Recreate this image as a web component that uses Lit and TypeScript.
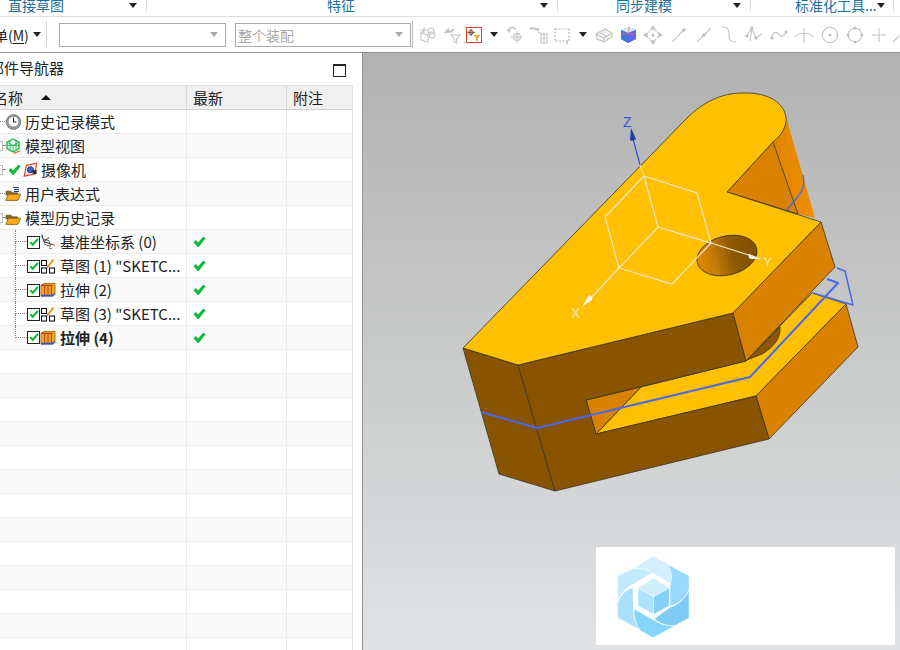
import { css, html, LitElement, svg } from "lit"
import { customElement } from "lit/decorators.js"

const grayIcon = (body: unknown) => html`<svg class="tool" viewBox="0 0 20 20" fill="none" stroke="#c4c4c4" stroke-width="1.1">${body}</svg>`

const clockIcon = html`<svg class="ico" viewBox="0 0 16 16">
  <circle cx="8.500" cy="8" r="7.400" fill="#9aa0a6" stroke="#6b7076" stroke-width=".8"/>
  <circle cx="8.500" cy="7.600" r="5.400" fill="#fff" stroke="#555" stroke-width=".6"/>
  <path d="M8.500 3.600V8H11.500" fill="none" stroke="#222" stroke-width="1.2"/>
</svg>`

const cubeIcon = html`<svg class="ico" viewBox="0 0 16 16" fill="none">
  <path d="M8 1L14 4.200V10.600L8 14L2 10.600V4.200Z" stroke="#16b84a" stroke-width="1.3"/>
  <path d="M2 4.200L8 7.400L14 4.200M8 7.400V14M5 2.600V12.200M11 2.600V12.200M2 7.600H14" stroke="#16b84a" stroke-width=".9"/>
  <path d="M9 15.400L15 12.800" stroke="#e0703a" stroke-width="1.2"/>
</svg>`

const checkIcon = html`<svg class="tick" viewBox="0 0 13 12"><path d="M.5 6.200L3 4L5 6.400L10.400 .5L12.600 2.400L5.200 11.500Z" fill="#12b83c"/></svg>`

const cameraIcon = html`<svg class="cam" viewBox="0 0 15 16" fill="none">
  <path d="M3.400 3.400L13.600 1.200L12 12L1.200 14.200Z" fill="#fbeeea" stroke="#d8482f" stroke-width="1.2"/>
  <circle cx="7.400" cy="7.800" r="3" fill="#3f62c8" stroke="#22307a"/>
  <rect x="9.600" y="8" width="4" height="4" fill="#333"/>
</svg>`

const folderIcon = (lines = false) => html`<svg class="ico" viewBox="0 0 16 16">
  ${lines ? svg`<path d="M8 1.500H14M9 3.500H14M9 5.500H14" stroke="#2c3f9a" stroke-width="1" fill="none"/>` : ""}
  <path d="M1 5.200H6L7.400 6.800H12.400V9H1Z" fill="#8a6a2a" stroke="#5b4518" stroke-width=".6"/>
  <path d="M.8 14.400L3.400 8.200H15.600L12.800 14.400Z" fill="#f7ae1c" stroke="#7d5a12" stroke-width=".8"/>
</svg>`

const checkBox = html`<svg class="box" viewBox="0 0 13 13">
  <rect x=".5" y=".5" width="12" height="12" fill="#fff" stroke="#222"/>
  <path d="M2.400 6.800L4 5.400L5.600 7.200L10.200 2.200L11.800 3.400L5.800 10.400Z" fill="#12b83c"/>
</svg>`

const datumIcon = html`<svg class="ico" viewBox="0 0 16 16" fill="none">
  <path d="M2 2L4 7.600L12 10.400M4 7.600L9 3.600" stroke="#333" stroke-width="1"/>
  <path d="M3.600 5L9 6.600L10.400 12.400L5 10.600Z" stroke="#555" stroke-width=".9"/>
  <path d="M2.200 .6V3.400" stroke="#2240d0" stroke-width="1.2"/>
  <path d="M12 10.400L15 11.400" stroke="#d06a30" stroke-width="1.2"/>
  <path d="M9 14L12 15" stroke="#777" stroke-width="1"/>
</svg>`

const sketchIcon = html`<svg class="ico" viewBox="0 0 16 16" fill="none">
  <rect x="1.500" y="2.500" width="5" height="5" stroke="#111" stroke-width="1.1"/>
  <rect x="1.500" y="10" width="5" height="5" stroke="#111" stroke-width="1.1"/>
  <rect x="9.500" y="10" width="5" height="5" stroke="#111" stroke-width="1.1"/>
  <path d="M8 8.400L13.600 1.600" stroke="#e8a020" stroke-width="2.2"/>
  <path d="M7.400 9.400L8 8" stroke="#c0392b" stroke-width="1.4"/>
</svg>`

const extrudeIcon = html`<svg class="ico" viewBox="0 0 16 16" fill="none">
  <path d="M1 3.400L4 1.400H15V11.600L12.400 14H1Z" fill="#f5a623" stroke="#9a5a10" stroke-width=".8"/>
  <path d="M4.600 3.400V13.400M8 3.400V13.400M11.400 3.400V13.400M1 3.400H12.400" stroke="#b5450f" stroke-width="1.1"/>
  <path d="M1 13.600H12.600L15 11.600" stroke="#2f56c8" stroke-width="1.6"/>
</svg>`

const dot = (cx: number, cy: number, r = 1.6) => svg`<circle cx=${cx} cy=${cy} r=${r} fill="#c0c0c0" stroke="none"/>`

const toolbar: { x: number, icon?: unknown }[] = [
  { x: 427, icon: grayIcon(svg`<path d="M3 8L10 10V17L3 15ZM3 8L6 6M6 2V8M2 5H9"/><circle cx="13" cy="6" r="3"/><circle cx="14" cy="10" r="3"/>`) },
  { x: 452, icon: grayIcon(svg`<path d="M3 8L6 5V7C9 7 11 6 11 4" stroke-width="2.2"/><path d="M9 10H18L14.600 14V18L12.400 16.600V14Z"/>`) },
  { x: 475, icon: html`<svg class="tool red" viewBox="0 0 16 16" fill="none">
    <rect x=".5" y=".5" width="15" height="15" fill="#fff" stroke="#d8432a"/>
    <circle cx="5" cy="5.400" r="2.200" stroke="#8a5a3a"/>
    <path d="M5 1.800V9M1.400 5.400H8.800" stroke="#6a4a3a"/>
    <path d="M7.400 8H14.400L12 11V14.400L10 13.200V11Z" fill="#f4a83c"/>
  </svg>` },
  { x: 492 },
  { x: 515, icon: grayIcon(svg`<path d="M2 6C3 2 8 1 10 5" stroke-width="1.5"/><path d="M1 4L3 7L5 5"/><circle cx="11" cy="12" r="3.400"/><path d="M11 6V18M5 12H17"/>`) },
  { x: 539, icon: grayIcon(svg`<path d="M1 4C4 1 7 6 10 4" stroke-width="2.4"/><path d="M9 7L13 9"/><rect x="12" y="9" width="6" height="9"/><path d="M15 9V18M12 13.500H18"/>`) },
  { x: 563, icon: grayIcon(svg`<rect x="3" y="4" width="14" height="12" stroke-dasharray="2 1.4" stroke="#aaa"/><path d="M15 16V19" stroke="#aaa"/>`) },
  { x: 582 },
  { x: 603, icon: grayIcon(svg`<path d="M2 9L11 4L18 8V12L10 17L3 14ZM2 9L3 14M2 9L10 13L18 8M10 13V17M5 7.400L13 11.600" fill="#f3f3f3"/>`) },
  { x: 627, icon: html`<svg class="tool" viewBox="0 0 20 20">
    <path d="M3 5L11 2L18 5V14L10 18L3 14Z" fill="#6d8ff0"/>
    <path d="M3 5L11 2L18 5L10 8Z" fill="#d8e6f6"/>
    <path d="M3 5L10 8V18L3 14Z" fill="#3f78d8"/>
    <path d="M10 8L18 5V14L10 18Z" fill="#5a68f2"/>
    <path d="M11 2V9M4 9H17" stroke="#e8705c" stroke-width=".8" fill="none"/>
  </svg>` },
  { x: 653, icon: grayIcon(svg`<path d="M10 3L17 10L10 17L3 10Z" stroke-dasharray="2 1"/><path d="M10 1L8 4H12ZM10 19L8 16H12ZM1 10L4 8V12ZM19 10L16 8V12Z" fill="#c4c4c4"/>${dot(10, 10)}`) },
  { x: 679, icon: grayIcon(svg`<path d="M3 17L15 5"/>${dot(15, 5, 1.8)}`) },
  { x: 703, icon: grayIcon(svg`<path d="M3 17L17 3"/>${dot(10, 10, 1.8)}`) },
  { x: 729, icon: grayIcon(svg`<path d="M3 2C9 2 10 4 10 9C10 15 11 17 17 17"/>`) },
  { x: 753, icon: grayIcon(svg`<path d="M2 12L8 3L12 13L18 9M8 3L6 16"/>${dot(8, 3)}${dot(3, 11)}${dot(12, 13)}`) },
  { x: 778, icon: grayIcon(svg`<path d="M2 13C5 5 9 7 10 10C12 13 15 11 18 6"/>${dot(3, 13)}${dot(17, 7)}`) },
  { x: 803, icon: grayIcon(svg`<path d="M1 12C4 7 16 7 19 12M10 3V18"/>`) },
  { x: 830, icon: grayIcon(svg`<circle cx="10" cy="10" r="7.600"/>${dot(10, 10, 1.5)}`) },
  { x: 853, icon: grayIcon(svg`<circle cx="10" cy="10" r="6.800"/>${dot(10, 3, 1.5)}${dot(10, 17, 1.5)}${dot(3, 10, 1.5)}${dot(17, 10, 1.5)}`) },
  { x: 880, icon: grayIcon(svg`<path d="M10 3V17M3 10H17"/>`) },
  { x: 899, icon: grayIcon(svg`<path d="M2 17L8 11"/>`) },
]

type Row = {
  kind: "root" | "child"
  label: string
  icon: unknown
  box?: boolean
  tick?: boolean
  last?: boolean
  bold?: boolean
}

const rows: Row[] = [
  { kind: "root", label: "历史记录模式", icon: clockIcon },
  { kind: "root", label: "模型视图", icon: cubeIcon, box: true },
  { kind: "root", label: "摄像机", icon: cameraIcon, box: true, tick: true },
  { kind: "root", label: "用户表达式", icon: folderIcon(true) },
  { kind: "root", label: "模型历史记录", icon: folderIcon(), box: true },
  { kind: "child", label: "基准坐标系 (0)", icon: datumIcon },
  { kind: "child", label: "草图 (1) \"SKETC...", icon: sketchIcon },
  { kind: "child", label: "拉伸 (2)", icon: extrudeIcon },
  { kind: "child", label: "草图 (3) \"SKETC...", icon: sketchIcon },
  { kind: "child", label: "拉伸 (4)", icon: extrudeIcon, last: true, bold: true },
  ...Array.from({ length: 13 }, () => ({ kind: "root" as const, label: "", icon: null })),
]

@customElement("app-root")
export class AppRoot extends LitElement {
  static styles = css`
  :host {
    display: block;
    width: 900px;
    height: 650px;
    overflow: hidden;
    background: #fff;
    color: #222;
    font-family: "Noto Sans CJK SC", "Liberation Sans", sans-serif;
    font-size: 14px;
  }

  .ribbon {
    display: flex;
    height: 17px;
    box-sizing: border-box;
    border-bottom: 1px solid #dedede;
    overflow: hidden;
    color: #1c6f9f;
    line-height: 14px;
  }

  .group {
    display: flex;
    height: 12px;
    box-sizing: border-box;
    border-right: 1px solid #dcdcdc;
    flex: none;
  }

  .group span {
    margin-top: -2px;
    white-space: nowrap;
  }

  .group i {
    margin: 3px 9px 0 auto;
  }

  .g1 { width: 147px; padding-left: 8px; }
  .g2 { width: 411px; padding-left: 180px; }
  .g3 { width: 193px; padding-left: 58px; }
  .g4 { width: 143px; padding-left: 44px; }

  .arrow {
    display: block;
    width: 0;
    height: 0;
    border-left: 4px solid transparent;
    border-right: 4px solid transparent;
    border-top: 5px solid #222;
    flex: none;
  }

  .toolbar {
    display: flex;
    align-items: center;
    height: 36px;
    box-sizing: border-box;
    border-bottom: 1px solid #8f9597;
  }

  .menu {
    margin-left: -6px;
    width: 39px;
    white-space: nowrap;
    flex: none;
  }

  .menu u {
    text-underline-offset: 2px;
  }

  .sep {
    width: 1px;
    height: 27px;
    background: #d8d8d8;
    flex: none;
    margin-left: 5px;
  }

  .sep.tools {
    margin: 0 2px 0 1px;
    background: #bbb;
  }

  .combo {
    display: flex;
    align-items: center;
    justify-content: space-between;
    box-sizing: border-box;
    height: 24px;
    padding: 0 7px 0 2px;
    border: 1px solid #ababab;
    color: #a8a8a8;
    flex: none;
  }

  .combo.parts { width: 167px; margin-left: 12px; }
  .combo.scope { width: 176px; margin-left: 9px; }

  .combo .arrow {
    border-top-color: #a9a9a9;
  }

  .slot {
    display: flex;
    justify-content: center;
    flex: none;
  }

  .tool {
    width: 20px;
    height: 20px;
    flex: none;
  }

  .tool.red {
    width: 16px;
    height: 16px;
  }

  .main {
    display: flex;
    height: 597px;
  }

  .panel {
    width: 362px;
    flex: none;
    display: flex;
    flex-direction: column;
    overflow: hidden;
    font-size: 15px;
  }

  .panel-head {
    display: flex;
    align-items: center;
    justify-content: space-between;
    height: 32px;
    padding-right: 16px;
    box-sizing: border-box;
  }

  .panel-head span {
    margin-left: -11px;
    margin-bottom: 3px;
  }

  .maxi {
    width: 13px;
    height: 13px;
    box-sizing: border-box;
    border: 1px solid #222;
    border-top-width: 2px;
    margin-top: 2px;
  }

  .table {
    width: 353px;
    flex: 1;
    border-top: 1px solid #dedede;
    border-right: 1px solid #e2e2e2;
    box-sizing: border-box;
    overflow: hidden;
  }

  .table-head, .row {
    display: grid;
    grid-template-columns: 187px 100px 65px;
    box-sizing: border-box;
  }

  .table-head {
    height: 24px;
    background: #f0f0f0;
    border-bottom: 1px solid #d2d2d2;
    align-items: center;
  }

  .head-cell {
    display: flex;
    align-items: center;
    height: 100%;
    padding-left: 6px;
    border-right: 1px solid #d8d8d8;
    box-sizing: border-box;
  }

  .head-cell:first-child {
    padding-left: 0;
  }

  .head-cell:first-child span {
    margin-left: -7px;
  }

  .head-cell:last-child {
    border-right: 0;
  }

  .sort {
    margin-left: 18px;
    width: 0;
    height: 0;
    border-left: 5.5px solid transparent;
    border-right: 5.5px solid transparent;
    border-bottom: 5px solid #111;
  }

  .row {
    height: 24px;
    border-bottom: 1px solid #ececec;
  }

  .row.alt {
    background: #fafafa;
  }

  .cell {
    display: flex;
    align-items: center;
    border-right: 1px solid #ececec;
    box-sizing: border-box;
    min-width: 0;
    white-space: nowrap;
  }

  .cell:last-child {
    border-right: 0;
  }

  .cell.state {
    padding-left: 6px;
  }

  .stub {
    flex: none;
    width: 5px;
    border-bottom: 1px dotted #888;
  }

  .expander {
    flex: none;
    display: flex;
    align-items: center;
    width: 5px;
  }

  .expander::before {
    content: "";
    width: 2px;
    height: 8px;
    border: 1px solid #bbb;
    border-left: 0;
    flex: none;
  }

  .expander::after {
    content: "";
    width: 2px;
    border-bottom: 1px dotted #888;
    flex: none;
  }

  .expander + .tick {
    margin-left: 3px;
  }

  .ico {
    width: 16px;
    height: 16px;
    flex: none;
  }

  .cam {
    width: 15px;
    height: 16px;
    flex: none;
    margin-left: 2px;
    margin-right: -1px;
  }

  .tick {
    width: 13px;
    height: 12px;
    flex: none;
  }

  .box {
    width: 13px;
    height: 13px;
    flex: none;
  }

  .label {
    margin-left: 4px;
    line-height: 20px;
  }

  .label.bold {
    font-weight: 700;
  }

  .branch {
    flex: none;
    align-self: stretch;
    width: 12px;
    margin-left: 15px;
  }

  .branch .h {
    box-sizing: border-box;
    height: 12px;
    border-left: 1px dotted #888;
    border-bottom: 1px dotted #888;
  }

  .branch .v {
    height: 12px;
    border-left: 1px dotted #888;
  }

  .view {
    position: relative;
    flex: 1;
    border-left: 1px solid #8f9597;
    background: linear-gradient(#b2b2b2, #c6c7c7 45%, #e1e2e4);
  }

  .view > svg {
    display: block;
  }

  .logo-box {
    position: absolute;
    right: 5px;
    bottom: 5px;
    width: 299px;
    height: 98px;
    background: #fff;
    padding: 7px 0 0 21px;
    box-sizing: border-box;
  }

  .logo-box svg {
    display: block;
    width: 73px;
    height: 85px;
  }
`

  renderToolbar() {
    let left = 415
    return toolbar.map((item, i) => {
      const next = toolbar[i + 1]
      const right = next ? Math.round((item.x + next.x) / 2) : 912
      const width = right - left
      left = right
      return html`<div class="slot" style="width:${width}px">
        ${item.icon ?? html`<i class="arrow"></i>`}
      </div>`
    })
  }

  renderRow(row: Row, i: number) {
    let tree: unknown = ""
    if (row.icon) {
      if (row.kind === "child") {
        tree = html`
          <div class="branch"><div class="h"></div>${row.last ? "" : html`<div class="v"></div>`}</div>
          ${checkBox}`
      } else {
        tree = html`<div class=${row.box ? "expander" : "stub"}></div>${row.tick ? checkIcon : ""}`
      }
    }
    const done = row.kind === "child"
    return html`
      <div class="row ${i % 2 ? "alt" : ""}">
        <div class="cell">
          ${tree}${row.icon ?? ""}
          ${row.label ? html`<span class="label ${row.bold ? "bold" : ""}">${row.label}</span>` : ""}
        </div>
        <div class="cell state">${done ? checkIcon : ""}</div>
        <div class="cell"></div>
      </div>`
  }

  renderModel() {
    return html`<svg width="537" height="597" viewBox="363 53 537 597">
      <defs>
        <linearGradient id="hole" x1="0" x2="1" y1="0" y2="0">
          <stop offset="0" stop-color="#e08a00"/>
          <stop offset=".3" stop-color="#c07a08"/>
          <stop offset=".6" stop-color="#8c5800"/>
          <stop offset="1" stop-color="#805000"/>
        </linearGradient>
        <linearGradient id="strip" x1="0" x2="1" y1="0" y2="0">
          <stop offset="0" stop-color="#e08600"/>
          <stop offset="1" stop-color="#ee8e00"/>
        </linearGradient>
      </defs>
      <path d="M773 142L786 117L815 218L798 214Z" fill="url(#strip)"/>
      <g stroke="#3a3228" stroke-width=".8" stroke-linejoin="round">
        <path d="M727 192L773 142L798 214Z" fill="#d98200"/>
        <path d="M596 434L641 387L746 361L812 293L846 304L756 396Z" fill="#ffc000"/>
        <path d="M747 360L780 327C781 338 774 347 762 354Z" fill="#8c5800"/>
        <path d="M586 400L641 387L596 434Z" fill="#d98200"/>
        <path d="M756 396L769 439L858 347L846 304Z" fill="#d98200"/>
        <path d="M463 348L518 365L555 491L499 474Z" fill="#885400"/>
        <path d="M518 365L733 313L746 361L586 400L596 434L756 396L769 439L555 491Z" fill="#885400"/>
        <path d="M733 313L821 222L835 267L746 361Z" fill="#d98200"/>
        <path d="M463 348L518 365L733 313L821 222L727 192L773 142C782 135 787 126 786 117C783 100 764 92 742 93C722 93 703 102 687 118Z" fill="#ffc000"/>
      </g>
      <ellipse cx="727" cy="255.500" rx="30.500" ry="19.500" transform="rotate(-14 727 255.500)" fill="url(#hole)" stroke="#3a3228" stroke-width=".8"/>

      <g fill="none" stroke="#4a68ee" stroke-linejoin="round">
        <path d="M481 412L537 428L750 377L838 283L827 279" stroke-width="2"/>
        <path d="M837 268L845 271L853 305L813 293" stroke-width="1.5"/>
        <path d="M803 175C806 186 800 195 795 200L787 210" stroke-width="1.3"/>
        <path d="M640 165L632 135" stroke="#2848e0" stroke-width="1.1"/>
      </g>

      <g fill="none" stroke="#f0e6cc" stroke-width="1.2">
        <path d="M644 176L697 193L711 243L658 227L644 176L605 217L619 268L658 227M619 268L672 284L711 243"/>
        <path d="M711 243L752 256M619 268L590 299"/>
      </g>
      <path d="M640 165L644 176" stroke="#f0e6cc" stroke-width="1"/>
      <path d="M631 128L636 139C634 141 631 141 630 140Z" fill="#1f3fa8"/>
      <path d="M762 259L749 254C748 256 749 259 751 259Z" fill="#f2f2f2"/>
      <path d="M582 307L589 295C591 295 593 298 592 300Z" fill="#f4f4f4"/>
      <text x="623" y="127" font-family="Liberation Sans" font-size="14" fill="#3355e6">Z</text>
      <text x="763" y="267" font-family="Liberation Sans" font-size="14" fill="#eee2c4">Y</text>
      <text x="571" y="318" font-family="Liberation Sans" font-size="14" fill="#eee2c4">X</text>
    </svg>`
  }

  renderLogo() {
    return html`<svg viewBox="80 40 220 255" stroke="#fff" stroke-width="1.500" stroke-linejoin="round">
      <path d="M189 45L232 68C245 90 248 110 243 130L187 97C165 85 145 82 125 85Z" fill="#d6effe"/>
      <path d="M232 70L297 105V147C285 175 265 190 240 197V135C248 110 245 90 232 70Z" fill="#97dafc"/>
      <path d="M297 150V232L255 255C235 258 212 250 192 235L240 200C265 192 285 175 297 150Z" fill="#80cbf5"/>
      <path d="M255 255L189 292L150 270C135 250 130 228 132 205L190 238C212 252 235 258 255 255Z" fill="#85d5fd"/>
      <path d="M82 232V185C92 160 108 147 128 140L130 200C128 228 135 250 150 268Z" fill="#abe0fb"/>
      <path d="M82 105L125 85C145 82 165 85 185 97L130 130C108 140 92 158 82 180Z" fill="#c2e9fd"/>
      <path d="M190 112L238 142L190 168L143 142Z" fill="#cfeefe"/>
      <path d="M143 142L190 168V222L143 195Z" fill="#afe2fc"/>
      <path d="M238 142V195L190 222V168Z" fill="#85d0f7"/>
    </svg>`
  }

  render() {
    return html`
      <div class="ribbon">
        <div class="group g1"><span>直接草图</span><i class="arrow"></i></div>
        <div class="group g2"><span>特征</span><i class="arrow"></i></div>
        <div class="group g3"><span>同步建模</span><i class="arrow"></i></div>
        <div class="group g4"><span>标准化工具...</span><i class="arrow"></i></div>
      </div>

      <div class="toolbar">
        <div class="menu">单(<u>M</u>)</div>
        <i class="arrow"></i>
        <div class="sep"></div>
        <div class="combo parts"><span></span><i class="arrow"></i></div>
        <div class="combo scope"><span>整个装配</span><i class="arrow"></i></div>
        <div class="sep tools"></div>
        ${this.renderToolbar()}
      </div>

      <div class="main">
        <div class="panel">
          <div class="panel-head"><span>部件导航器</span><div class="maxi"></div></div>
          <div class="table">
            <div class="table-head">
              <div class="head-cell"><span>名称</span><i class="sort"></i></div>
              <div class="head-cell"><span>最新</span></div>
              <div class="head-cell"><span>附注</span></div>
            </div>
            ${rows.map((row, i) => this.renderRow(row, i))}
          </div>
        </div>
        <div class="view">
          ${this.renderModel()}
          <div class="logo-box">${this.renderLogo()}</div>
        </div>
      </div>
    `
  }
}
